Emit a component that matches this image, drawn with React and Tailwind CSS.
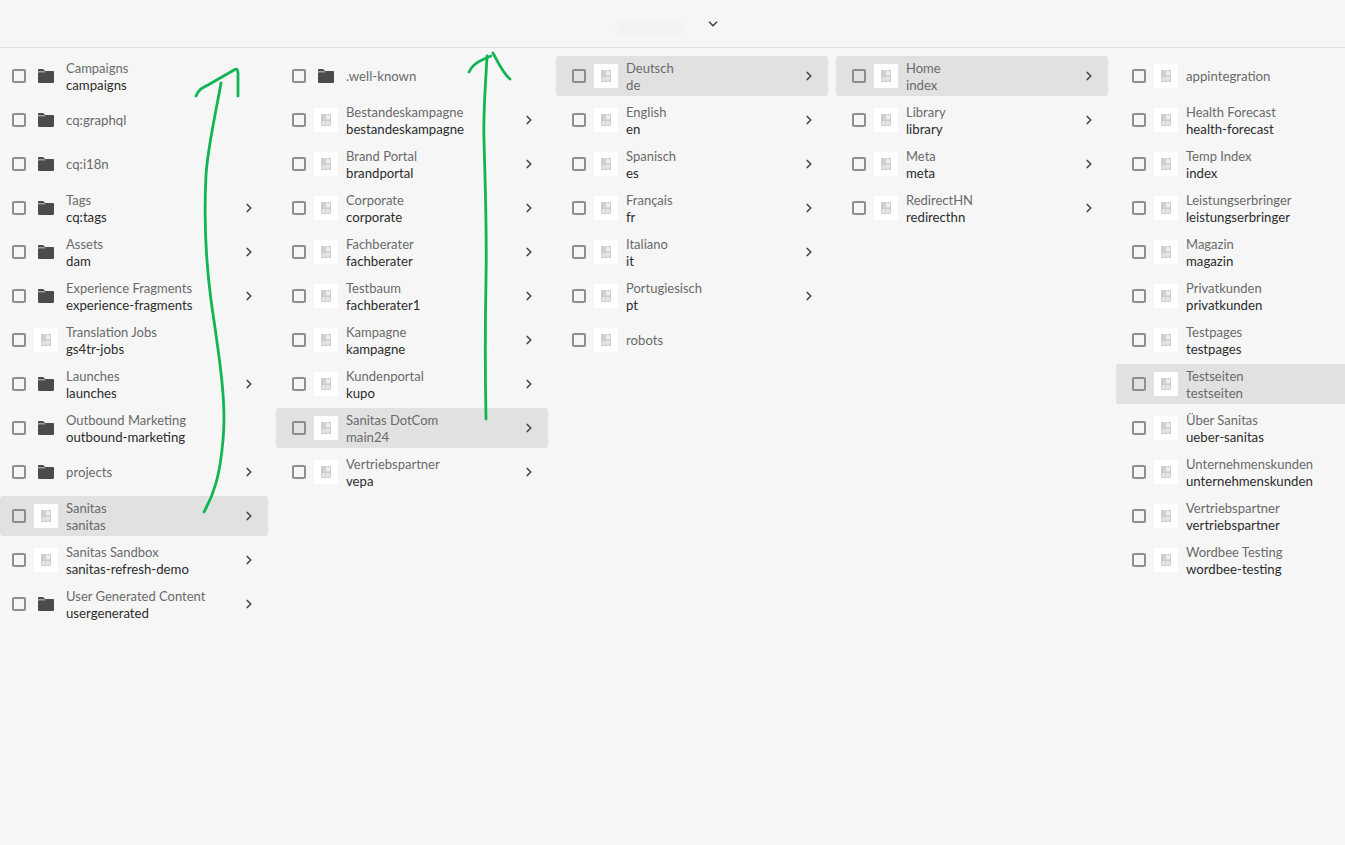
import React from "react";
import { ChevronRight, ChevronDown } from "lucide-react";

const columns = [
  [
    { title: "Campaigns", name: "campaigns", folder: true },
    { name: "cq:graphql", folder: true },
    { name: "cq:i18n", folder: true },
    { title: "Tags", name: "cq:tags", folder: true, more: true },
    { title: "Assets", name: "dam", folder: true, more: true },
    { title: "Experience Fragments", name: "experience-fragments", folder: true, more: true },
    { title: "Translation Jobs", name: "gs4tr-jobs" },
    { title: "Launches", name: "launches", folder: true, more: true },
    { title: "Outbound Marketing", name: "outbound-marketing", folder: true },
    { name: "projects", folder: true, more: true },
    { title: "Sanitas", name: "sanitas", more: true, active: true },
    { title: "Sanitas Sandbox", name: "sanitas-refresh-demo", more: true },
    { title: "User Generated Content", name: "usergenerated", folder: true, more: true },
  ],
  [
    { name: ".well-known", folder: true },
    { title: "Bestandeskampagne", name: "bestandeskampagne", more: true },
    { title: "Brand Portal", name: "brandportal", more: true },
    { title: "Corporate", name: "corporate", more: true },
    { title: "Fachberater", name: "fachberater", more: true },
    { title: "Testbaum", name: "fachberater1", more: true },
    { title: "Kampagne", name: "kampagne", more: true },
    { title: "Kundenportal", name: "kupo", more: true },
    { title: "Sanitas DotCom", name: "main24", more: true, active: true },
    { title: "Vertriebspartner", name: "vepa", more: true },
  ],
  [
    { title: "Deutsch", name: "de", more: true, active: true },
    { title: "English", name: "en", more: true },
    { title: "Spanisch", name: "es", more: true },
    { title: "Français", name: "fr", more: true },
    { title: "Italiano", name: "it", more: true },
    { title: "Portugiesisch", name: "pt", more: true },
    { name: "robots" },
  ],
  [
    { title: "Home", name: "index", more: true, active: true },
    { title: "Library", name: "library", more: true },
    { title: "Meta", name: "meta", more: true },
    { title: "RedirectHN", name: "redirecthn", more: true },
  ],
  [
    { name: "appintegration" },
    { title: "Health Forecast", name: "health-forecast" },
    { title: "Temp Index", name: "index" },
    { title: "Leistungserbringer", name: "leistungserbringer" },
    { title: "Magazin", name: "magazin" },
    { title: "Privatkunden", name: "privatkunden" },
    { title: "Testpages", name: "testpages" },
    { title: "Testseiten", name: "testseiten", active: true },
    { title: "Über Sanitas", name: "ueber-sanitas" },
    { title: "Unternehmenskunden", name: "unternehmenskunden" },
    { title: "Vertriebspartner", name: "vertriebspartner" },
    { title: "Wordbee Testing", name: "wordbee-testing" },
  ],
];

const FolderIcon = () => (
  <svg width="16" height="14" viewBox="0 0 16 14" className="text-[#4b4b4b]">
    <path
      fill="currentColor"
      d="M0 1.200C0 .5.5 0 1.200 0h3.600c.4 0 .7.2 1 .5L7 2h7.800c.7 0 1.200.5 1.200 1.200v9.600c0 .7-.5 1.200-1.200 1.200H1.200C.5 14 0 13.500 0 12.800V1.200Z"
    />
    <path fill="#f5f5f5" d="M0 3.200h7.600L6.400 2.400H0Z" />
  </svg>
);

const PageIcon = () => (
  <div className="flex h-6 w-6 shrink-0 items-center justify-center bg-white">
    <svg width="10" height="12" viewBox="0 0 10 12">
      <rect width="10" height="12" fill="#cfcfcf" />
      <rect x="5" y="1" width="4" height="4.500" fill="#ececec" />
      <rect x="1" y="7" width="3.500" height="4" fill="#e4e4e4" />
      <rect x="5" y="7" width="4" height="4" fill="#e4e4e4" />
    </svg>
  </div>
);

const Row = ({ item, first }) => (
  <div
    className={`flex h-10 items-center rounded-[3px] pr-3 ${first ? "pl-3" : "pl-4"} ${
      item.active ? "bg-[#e1e1e1]" : ""
    }`}
  >
    <div className="h-[14px] w-[14px] shrink-0 rounded-[2px] border-2 border-[#8e8e8e]" />
    <div className="ml-[8px] flex w-6 shrink-0 justify-center">
      {item.folder ? <FolderIcon /> : <PageIcon />}
    </div>
    <div className="ml-2 min-w-0 flex-1 pt-[1px] leading-[17px] whitespace-nowrap">
      {item.title && <div className="text-[13px] text-[#6a6a6a]">{item.title}</div>}
      <div
        className={`text-[13.2px] ${item.title && !item.active ? "text-[#2c2c2c]" : "text-[#6a6a6a]"}`}
      >
        {item.name}
      </div>
    </div>
    {item.more && <ChevronRight size={14} strokeWidth={3} className="text-[#4b4b4b]" />}
  </div>
);

export default function App() {
  return (
    <div
      className="relative h-[845px] w-[1345px] overflow-hidden bg-[#f6f6f6]"
      style={{ fontFamily: 'Lato, "Noto Sans", sans-serif' }}
    >
      <header className="flex h-12 items-center justify-center border-b border-[#e1e1e1] pb-[1px]">
        {/* title is blurred out in the screenshot */}
        <div className="relative left-[-17px] top-[5px] h-3 w-[64px] rounded bg-[#f1f1f1] blur-[3px]" />
        <ChevronDown size={14} strokeWidth={3} className="relative left-[8px] top-[1px] text-[#4b4b4b]" />
      </header>

      <div className="flex gap-2 pt-2">
        {columns.map((rows, i) => (
          <div key={i} className={`flex shrink-0 flex-col gap-1 ${i === 0 ? "w-[268px]" : "w-[272px]"}`}>
            {rows.map((item) => (
              <Row key={item.name} item={item} first={i === 0} />
            ))}
          </div>
        ))}
      </div>

      {/* hand drawn arrows on top of the screenshot */}
      <svg
        width="1345"
        height="845"
        className="pointer-events-none absolute top-0 left-0"
        fill="none"
        stroke="#12b454"
        strokeWidth="2.800"
        strokeLinecap="round"
        strokeLinejoin="round"
      >
        <path d="M204 512C214 494 220 476 223 440C227 400 218 350 211 300C205 255 204 215 206 175C208 145 216 112 221 83" />
        <path d="M196 96C198 90 202 88 208 85L234 70C237 68 238 70 238 74L238 96" />
        <path d="M486 419C485 370 485 330 486 280C487 230 485 180 484 140C483 110 486 80 487 56" />
        <path d="M469 72C472 65 477 62 484 59L491 56" />
        <path d="M493 53C497 60 502 72 510 79" />
      </svg>
    </div>
  );
}
